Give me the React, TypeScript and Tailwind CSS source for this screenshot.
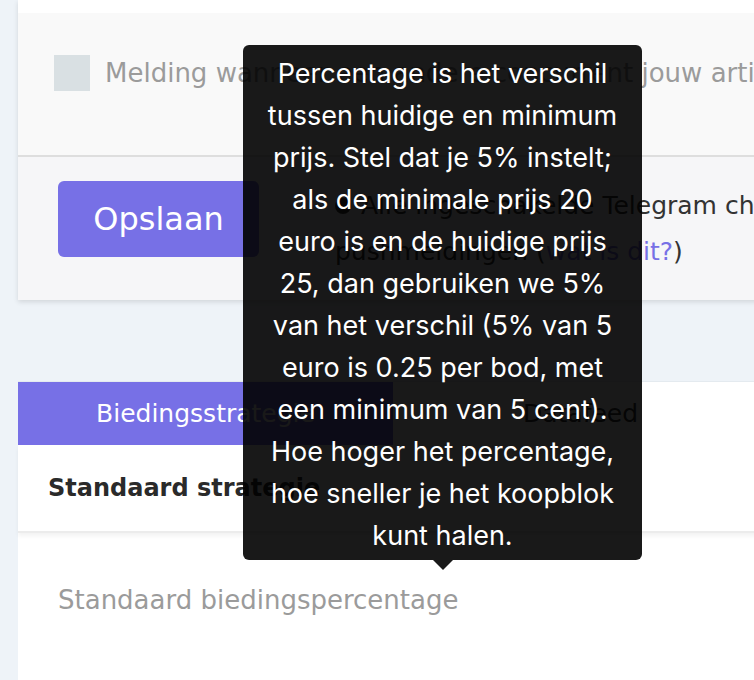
import React from "react";

const lines = [
  "Percentage is het verschil",
  "tussen huidige en minimum",
  "prijs. Stel dat je 5% instelt;",
  "als de minimale prijs 20",
  "euro is en de huidige prijs",
  "25, dan gebruiken we 5%",
  "van het verschil (5% van 5",
  "euro is 0.25 per bod, met",
  "een minimum van 5 cent).",
  "Hoe hoger het percentage,",
  "hoe sneller je het koopblok",
  "kunt halen.",
];

export default function App() {
  return (
    <div className="relative w-[754px] h-[680px] overflow-hidden bg-[#eef3f8] font-['DejaVu_Sans',sans-serif]">
      <div className="pl-[18px]">
        {/* Card 1 */}
        <div className="w-[750px] bg-white shadow-[0_2px_5px_rgba(0,0,0,0.12)]">
          <div className="h-[13px] bg-white" />
          <div className="h-[144px] bg-[#f9f9f9] border-b-2 border-[#dedede] flex items-start pt-[42px] pl-[36px]">
            <div className="w-[36px] h-[36px] bg-[#d9e0e3] shrink-0" />
            <div className="ml-[15px] text-[26px] leading-[36px] text-[#9b9b9b] whitespace-nowrap">
              Melding wanneer een andere concurrent jouw artikel overbiedt
            </div>
          </div>
          <div className="h-[143px] bg-[#f6f6f8] flex items-start pl-[40px] pt-[24px]">
            <button className="w-[201px] h-[76px] shrink-0 rounded-[6px] bg-[#7770e6] text-white text-[32px] leading-none">
              Opslaan
            </button>
            <div className="ml-[76px] pt-[2px] text-[25px] leading-[46px] text-[#333333] whitespace-nowrap">
              <div className="flex items-center">
                <span className="inline-block w-[16px] h-[16px] rounded-full bg-[#3a3a3a] mr-[10px]" />
                <span>Alle ingeschakelde Telegram chats krijgen</span>
              </div>
              <div>
                pushmeldingen (<span className="text-[#7770e6]">wat is dit?</span>)
              </div>
            </div>
          </div>
        </div>

        {/* Card 2 */}
        <div className="mt-[81px] w-[750px] bg-white border-t border-[#e4eaef]">
          <div className="h-[63px] flex">
            <div className="w-[375px] bg-[#7770e6] text-white text-[25px] flex items-center justify-center">
              Biedingsstrategie
            </div>
            <div className="w-[375px] text-[#333333] text-[25px] flex items-center justify-center">
              Datafeed
            </div>
          </div>
          <div className="h-[88px] flex items-center pl-[30px] border-b-2 border-[#ececec] shadow-[0_3px_4px_rgba(0,0,0,0.05)]">
            <span className="text-[24px] font-bold text-[#2a2a2a]">Standaard strategie</span>
          </div>
          <div className="pl-[40px] pt-[47px] text-[26px] leading-[40px] text-[#9b9b9b] h-[200px]">
            Standaard biedingspercentage
          </div>
        </div>
      </div>

      {/* Tooltip */}
      <div className="absolute left-[243px] top-[45px] w-[399px] rounded-[6px] bg-black/90 pt-[8px] pb-[3px] text-center text-white font-['Inter',sans-serif] text-[27px] leading-[42px]">
        {lines.map((l, i) => (
          <div key={i} className="whitespace-nowrap">
            {l}
          </div>
        ))}
        <div className="absolute left-1/2 -translate-x-1/2 top-full w-0 h-0 border-x-[10px] border-x-transparent border-t-[10px] border-t-black/90" />
      </div>
    </div>
  );
}
